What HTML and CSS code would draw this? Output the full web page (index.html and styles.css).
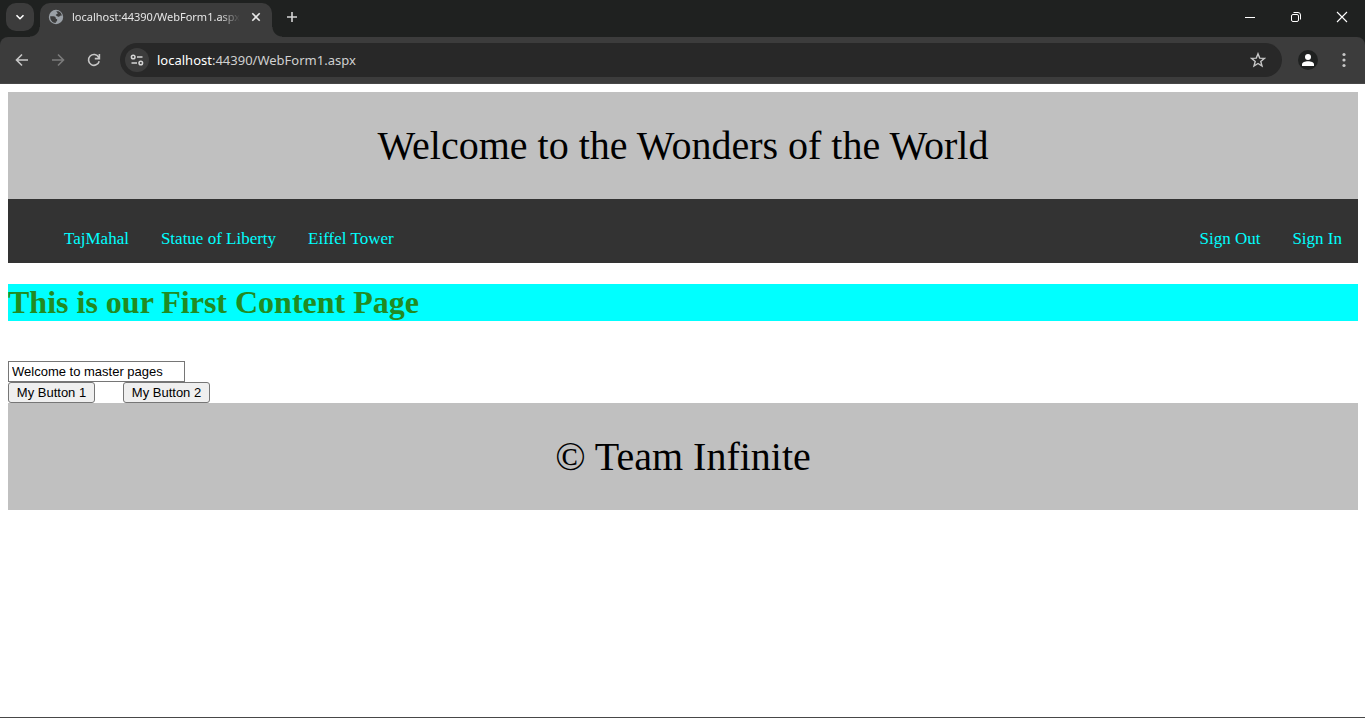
FILE: index.html
```
<!DOCTYPE html>
<html lang="en">
<head>
<meta charset="utf-8">
<title>localhost:44390/WebForm1.aspx</title>
<link rel="stylesheet" href="styles.css">
</head>
<body>
<div class="browser">
  <div class="tabstrip">
    <button class="tab-search" aria-label="Search tabs">
      <svg width="12" height="12" viewBox="0 0 12 12"><path d="M2.500 4.200 6 7.700l3.500-3.500" fill="none" stroke="#fff" stroke-width="1.600"/></svg>
    </button>
    <div class="tab">
      <svg class="favicon" width="16" height="16" viewBox="0 0 16 16"><circle cx="8" cy="8" r="7.200" fill="#9aa0a6"/><path d="M8.200 2.200h2.200c2 .8 3.300 2.600 3.500 4.600-.8-.6-1.600-.5-2 .3-.5.9-1.800.9-2.500.2-.6-.6-1.200-.5-1.500-1.100-.2-.6.3-1 .9-1 .6-.1 1-.6.8-1.200zM2.200 7.300h3.200c1.500 0 2.400.9 2.400 2 0 .8.7.8 1.300.8v1.600c0 .7-.7.8-1.300.8v1.500c-3.200 0-5.800-2.700-5.600-6.700z" fill="#3c3c3c"/></svg>
      <span class="tab-title">localhost:44390/WebForm1.aspx</span>
      <button class="tab-close" aria-label="Close tab"><svg width="10" height="10" viewBox="0 0 10 10"><path d="m1.300 1.300 7.400 7.400m0-7.400-7.400 7.400" stroke="#e8e8e8" stroke-width="1.600"/></svg></button>
    </div>
    <button class="new-tab" aria-label="New tab"><svg width="12" height="12" viewBox="0 0 12 12"><path d="M6 1v10M1 6h10" stroke="#d5d5d5" stroke-width="1.600"/></svg></button>
    <div class="window-controls">
      <button aria-label="Minimize"><svg width="12" height="12" viewBox="0 0 12 12"><path d="M1 6.500h10" stroke="#fff"/></svg></button>
      <button aria-label="Restore"><svg width="12" height="12" viewBox="0 0 12 12" fill="none" stroke="#fff"><rect x="1.500" y="3.500" width="7" height="7" rx="1.500"/><path d="M3.500 1.500H8a2.500 2.500 0 0 1 2.500 2.500v4.500"/></svg></button>
      <button aria-label="Close"><svg width="12" height="12" viewBox="0 0 12 12"><path d="m1 1 10 10M11 1 1 11" stroke="#fff" stroke-width="1.100"/></svg></button>
    </div>
  </div>
  <div class="toolbar">
    <button class="tool" aria-label="Back"><svg width="14" height="14" viewBox="0 0 14 14" fill="none" stroke="#c7c7c7" stroke-width="1.600"><path d="M13 7H2M7 1.500 1.500 7 7 12.500"/></svg></button>
    <button class="tool" aria-label="Forward" disabled><svg width="14" height="14" viewBox="0 0 14 14" fill="none" stroke="#7b7b7b" stroke-width="1.600"><path d="M1 7h11M7 1.500 12.500 7 7 12.500"/></svg></button>
    <button class="tool" aria-label="Reload"><svg width="14" height="14" viewBox="0 0 14 14" fill="none" stroke="#c7c7c7" stroke-width="1.600"><path d="M12.200 8.200A5.400 5.400 0 1 1 11.700 4.300M12.400 1v4.600H7.800"/></svg></button>
    <div class="omnibox">
      <button class="site-info" aria-label="View site information"><svg width="14" height="14" viewBox="0 0 14 14" fill="none" stroke="#d5d5d5" stroke-width="1.500"><circle cx="3.200" cy="4" r="1.800"/><path d="M7 4h5.500M1.500 10H7"/><circle cx="10.800" cy="10" r="1.800"/></svg></button>
      <span class="url"><span class="host">localhost</span>:44390/WebForm1.aspx</span>
      <button class="bookmark" aria-label="Bookmark this tab"><svg width="16" height="16" viewBox="0 0 16 16"><path d="m8 1.800 1.700 4.300 4.700.3-3.600 3 1.200 4.600L8 11.500 4 14l1.200-4.600-3.600-3 4.700-.3z" fill="none" stroke="#c7c7c7" stroke-width="1.400"/></svg></button>
    </div>
    <button class="profile" aria-label="Profile"><svg width="20" height="20" viewBox="0 0 20 20"><circle cx="10" cy="10" r="10" fill="#1f2120"/><circle cx="10" cy="7" r="3" fill="#fff"/><path d="M4 16v-1.500c0-2.300 3-3.300 6-3.300s6 1 6 3.300V16z" fill="#fff"/></svg></button>
    <button class="menu" aria-label="Menu"><svg width="4" height="16" viewBox="0 0 4 16" fill="#c7c7c7"><circle cx="2" cy="2.500" r="1.600"/><circle cx="2" cy="8" r="1.600"/><circle cx="2" cy="13.500" r="1.600"/></svg></button>
  </div>
  <div class="page">
    <header class="banner">Welcome to the Wonders of the World</header>
    <nav class="nav">
      <ul class="nav-list">
        <li><a href="#">TajMahal</a></li>
        <li><a href="#">Statue of Liberty</a></li>
        <li><a href="#">Eiffel Tower</a></li>
        <li class="nav-end"><a href="#">Sign Out</a></li>
        <li><a href="#">Sign In</a></li>
      </ul>
    </nav>
    <main>
      <h1 class="heading">This is our First Content Page</h1>
      <form class="form">
        <input class="field" type="text" value="Welcome to master pages" aria-label="Message">
        <div class="actions">
          <button class="btn" type="button">My Button 1</button>
          <button class="btn" type="button">My Button 2</button>
        </div>
      </form>
    </main>
    <footer class="banner">© Team Infinite</footer>
  </div>
</div>
</body>
</html>
```
FILE: styles.css
```
* { box-sizing: border-box; }

body {
  margin: 0;
  background: #fff;
  color: #000;
  font: 17px/18px "Liberation Serif", serif;
}

svg { display: block; flex: none; }

.browser {
  display: flex;
  flex-direction: column;
  min-height: 100vh;
  border-bottom: 1px solid #474747;
  background: linear-gradient(#1f2120 50px, #fff 50px);
}

.tabstrip button,
.toolbar button {
  display: flex;
  align-items: center;
  justify-content: center;
  flex: none;
  margin: 0;
  padding: 0;
  border: 0;
  background: none;
}

.tabstrip {
  display: flex;
  height: 37px;
  padding: 3px 0 0 6px;
  font: 11px/16px "Noto Sans", sans-serif;
  color: #e6e6e6;
}

.tabstrip .tab-search {
  width: 28px;
  height: 28px;
  margin-right: 6px;
  border-radius: 10px;
  background: #3c3c3c;
}

.tab {
  position: relative;
  display: flex;
  align-items: center;
  width: 232px;
  padding: 0 8px 6px;
  border-radius: 10px 10px 0 0;
  background: #3c3c3c;
}

.tab::before,
.tab::after {
  content: "";
  position: absolute;
  bottom: 0;
  width: 10px;
  height: 10px;
}

.tab::before {
  right: 100%;
  background: radial-gradient(circle at 0 0, transparent 9px, #3c3c3c 10px);
}

.tab::after {
  left: 100%;
  background: radial-gradient(circle at 100% 0, transparent 9px, #3c3c3c 10px);
}

.tab-title {
  flex: 1;
  min-width: 0;
  margin: 0 8px;
  overflow: hidden;
  white-space: nowrap;
  -webkit-mask-image: linear-gradient(to left, transparent, #000 20px);
  mask-image: linear-gradient(to left, transparent, #000 20px);
}

.tabstrip .tab-close {
  width: 16px;
  height: 16px;
}

.tabstrip .new-tab {
  width: 28px;
  height: 28px;
  margin-left: 6px;
}

.window-controls {
  display: flex;
  height: 28px;
  margin-left: auto;
}

.tabstrip .window-controls button { width: 46px; }

.toolbar {
  display: flex;
  align-items: center;
  height: 47px;
  padding: 0 12px 0 8px;
  border-bottom: 1px solid #474747;
  border-radius: 8px 8px 0 0;
  background: #3c3c3c;
}

.toolbar .tool {
  width: 28px;
  height: 28px;
  margin-right: 8px;
}

.omnibox {
  display: flex;
  align-items: center;
  flex: 1;
  height: 34px;
  margin-left: 4px;
  padding: 0 16px 0 5px;
  border-radius: 17px;
  background: #282828;
  color: #d0d0d0;
  font: 13px/20px "Noto Sans", sans-serif;
}

.toolbar .site-info {
  width: 24px;
  height: 24px;
  margin-right: 8px;
  border-radius: 12px;
  background: #3c3c3c;
}

.host { color: #fff; }

.toolbar .bookmark { margin-left: auto; }

.toolbar .profile { margin: 0 16px; }

.toolbar .menu { width: 19px; }

.page { padding: 8px 7px 0 8px; }

.banner {
  padding: 30px 0;
  background: #c0c0c0;
  font-size: 40px;
  line-height: 47px;
  text-align: center;
}

.nav {
  padding: 16px 0 0 40px;
  background: #333;
}

.nav-list {
  display: flex;
  margin: 0;
  padding: 0;
  list-style: none;
}

.nav-list a {
  display: block;
  padding: 15px 16px;
  color: #0ff;
  text-decoration: none;
}

.nav-end { margin-left: auto; }

.heading {
  margin: 21px 0 40px;
  background: #0ff;
  color: #228b22;
  font-size: 32px;
  line-height: 37px;
}

.form {
  display: flex;
  flex-direction: column;
  align-items: flex-start;
}

.field,
.btn {
  height: 21px;
  margin: 0;
  border: 1px solid #767676;
  color: #000;
  font: 13px/15px "Liberation Sans", Arial, sans-serif;
}

.field {
  width: 177px;
  padding: 1px 3px;
  border-radius: 0;
  background: #fff;
}

.actions {
  display: flex;
  gap: 28px;
}

.btn {
  width: 87px;
  padding: 1px 6px;
  border-radius: 3px;
  background: #efefef;
  white-space: nowrap;
}
```
